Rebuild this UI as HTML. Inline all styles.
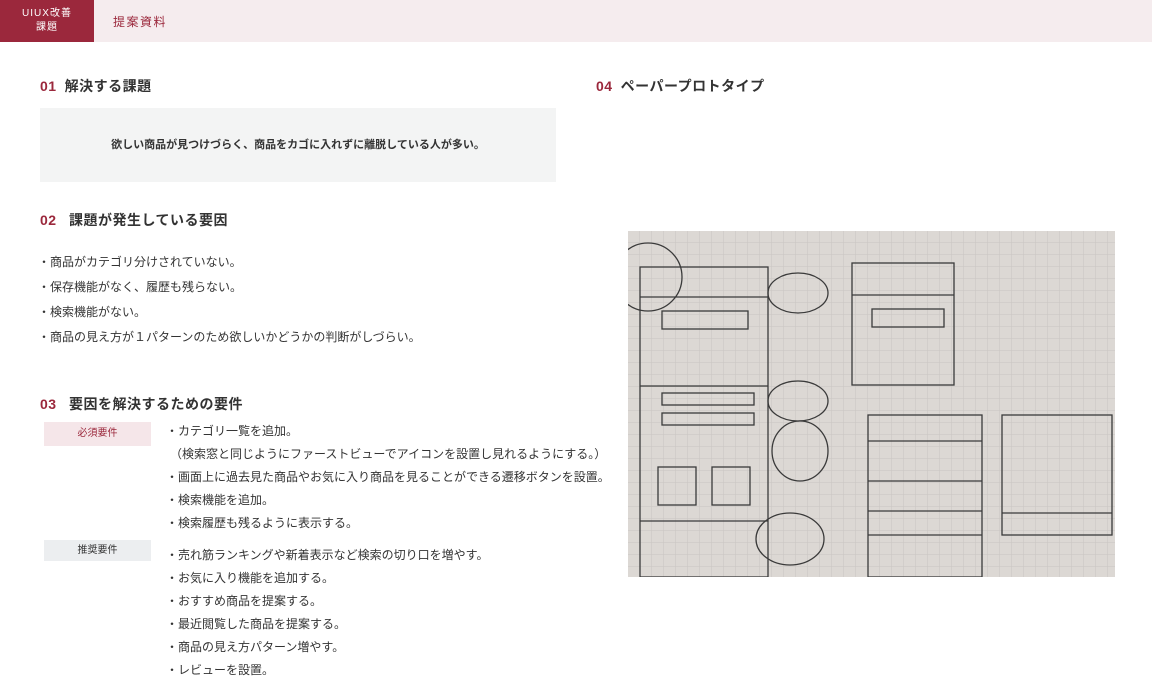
<!DOCTYPE html>
<html><head><meta charset="utf-8"><style>
*{margin:0;padding:0;box-sizing:border-box}
body{width:1152px;height:700px;background:#fff;font-family:"Liberation Sans","Noto Sans CJK JP",sans-serif;color:#333;position:relative;overflow:hidden}
.hdr{position:absolute;left:0;top:0;width:1152px;height:42px;background:#f5ecee}
.logo{position:absolute;left:0;top:0;width:94px;height:42px;background:#9b283c;color:#fff;font-size:10px;text-align:center;line-height:14px;padding-top:7px;letter-spacing:1px}
.ttl{position:absolute;left:113px;top:13px;font-size:12px;color:#9b283c;letter-spacing:1.5px}
.h{position:absolute;font-size:14px;font-weight:bold;color:#333;letter-spacing:.5px}
.h b{color:#9b283c;margin-right:8px}
.box{position:absolute;left:40px;top:108px;width:516px;height:74px;background:#f3f4f4;font-size:11px;font-weight:bold;text-align:center;line-height:74px}
.li{position:absolute;font-size:12px;white-space:nowrap}
.tag{position:absolute;left:44px;width:107px;font-size:10px;text-align:center}
</style></head><body>
<div class="hdr"></div>
<div class="logo">UIUX改善<br>課題</div>
<div class="ttl">提案資料</div>
<div class="h" style="left:40px;top:76px"><b>01</b>解決する課題</div>
<div class="box">欲しい商品が見つけづらく、商品をカゴに入れずに離脱している人が多い。</div>
<div class="h" style="left:40px;top:210px"><b>02</b> 課題が発生している要因</div>
<div class="li" style="left:38px;top:253px">・商品がカテゴリ分けされていない。</div>
<div class="li" style="left:38px;top:278px">・保存機能がなく、履歴も残らない。</div>
<div class="li" style="left:38px;top:303px">・検索機能がない。</div>
<div class="li" style="left:38px;top:328px">・商品の見え方が１パターンのため欲しいかどうかの判断がしづらい。</div>
<div class="h" style="left:40px;top:394px"><b>03</b> 要因を解決するための要件</div>
<div class="tag" style="top:422px;height:24px;line-height:24px;background:#f5e6e9;color:#9b283c">必須要件</div>
<div class="tag" style="top:540px;height:21px;line-height:21px;background:#eceef0;color:#333">推奨要件</div>
<div class="li" style="left:166px;top:422px">・カテゴリ一覧を追加。</div>
<div class="li" style="left:170px;top:445px">（検索窓と同じようにファーストビューでアイコンを設置し見れるようにする。）</div>
<div class="li" style="left:166px;top:468px">・画面上に過去見た商品やお気に入り商品を見ることができる遷移ボタンを設置。</div>
<div class="li" style="left:166px;top:491px">・検索機能を追加。</div>
<div class="li" style="left:166px;top:514px">・検索履歴も残るように表示する。</div>
<div class="li" style="left:166px;top:546px">・売れ筋ランキングや新着表示など検索の切り口を増やす。</div>
<div class="li" style="left:166px;top:569px">・お気に入り機能を追加する。</div>
<div class="li" style="left:166px;top:592px">・おすすめ商品を提案する。</div>
<div class="li" style="left:166px;top:615px">・最近閲覧した商品を提案する。</div>
<div class="li" style="left:166px;top:638px">・商品の見え方パターン増やす。</div>
<div class="li" style="left:166px;top:661px">・レビューを設置。</div>
<div class="h" style="left:596px;top:76px"><b>04</b>ペーパープロトタイプ</div>
<svg style="position:absolute;left:628px;top:231px" width="487" height="346" viewBox="0 0 487 346">
<defs><pattern id="g" width="12" height="12" patternUnits="userSpaceOnUse"><rect width="12" height="12" fill="#dcd8d4"/><path d="M12 0V12H0" fill="none" stroke="#c9c5c2" stroke-width="1"/></pattern></defs>
<rect width="487" height="346" fill="url(#g)"/>
<g fill="none" stroke="#3a3a3a" stroke-width="1.3">
<rect x="12" y="36" width="128" height="310"/><line x1="12" y1="66" x2="140" y2="66"/><rect x="34" y="80" width="86" height="18"/>
<line x1="12" y1="155" x2="140" y2="155"/><rect x="34" y="162" width="92" height="12"/><rect x="34" y="182" width="92" height="12"/>
<rect x="30" y="236" width="38" height="38"/><rect x="84" y="236" width="38" height="38"/><line x1="12" y1="290" x2="140" y2="290"/>
<rect x="224" y="32" width="102" height="122"/><line x1="224" y1="64" x2="326" y2="64"/><rect x="244" y="78" width="72" height="18"/>
<rect x="240" y="184" width="114" height="162"/><line x1="240" y1="210" x2="354" y2="210"/><line x1="240" y1="250" x2="354" y2="250"/><line x1="240" y1="280" x2="354" y2="280"/><line x1="240" y1="304" x2="354" y2="304"/>
<rect x="374" y="184" width="110" height="120"/><line x1="374" y1="282" x2="484" y2="282"/>
<circle cx="20" cy="46" r="34"/><ellipse cx="170" cy="62" rx="30" ry="20"/><ellipse cx="170" cy="170" rx="30" ry="20"/><ellipse cx="162" cy="308" rx="34" ry="26"/><ellipse cx="172" cy="220" rx="28" ry="30"/>
</g></svg>
</body></html>
